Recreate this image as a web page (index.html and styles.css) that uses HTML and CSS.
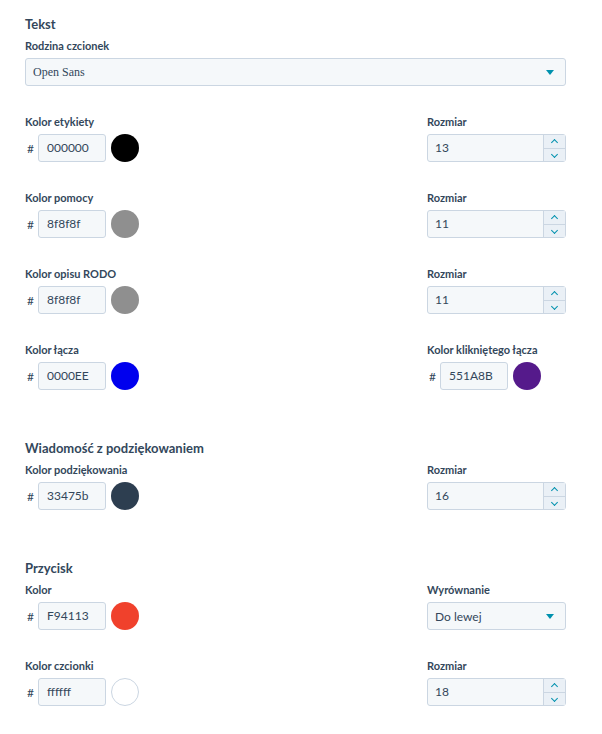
FILE: index.html
```html
<!DOCTYPE html>
<html>

<head>
    <title>Ustawienia formularza</title>
    <link rel="stylesheet" href="styles.css">
</head>

<body>
    <div class="panel">

        <!-- Tekst -->
        <div class="section">
            <h2 class="section-title">Tekst</h2>
            <div class="row">
                <div class="field full">
                    <label>Rodzina czcionek</label>
                    <div class="select serif">
                        <span>Open Sans</span>
                        <span class="caret"></span>
                    </div>
                </div>
            </div>
            <div class="row">
                <div class="field">
                    <label>Kolor etykiety</label>
                    <div class="color-input">
                        <span class="hash">#</span>
                        <div class="text-box">000000</div>
                        <span class="swatch" style="background:#000000"></span>
                    </div>
                </div>
                <div class="field right">
                    <label>Rozmiar</label>
                    <div class="number-box">
                        <span class="value">13</span>
                        <span class="spinner"><span class="up"></span><span class="down"></span></span>
                    </div>
                </div>
            </div>
            <div class="row">
                <div class="field">
                    <label>Kolor pomocy</label>
                    <div class="color-input">
                        <span class="hash">#</span>
                        <div class="text-box">8f8f8f</div>
                        <span class="swatch" style="background:#8f8f8f"></span>
                    </div>
                </div>
                <div class="field right">
                    <label>Rozmiar</label>
                    <div class="number-box">
                        <span class="value">11</span>
                        <span class="spinner"><span class="up"></span><span class="down"></span></span>
                    </div>
                </div>
            </div>
            <div class="row">
                <div class="field">
                    <label>Kolor opisu RODO</label>
                    <div class="color-input">
                        <span class="hash">#</span>
                        <div class="text-box">8f8f8f</div>
                        <span class="swatch" style="background:#8f8f8f"></span>
                    </div>
                </div>
                <div class="field right">
                    <label>Rozmiar</label>
                    <div class="number-box">
                        <span class="value">11</span>
                        <span class="spinner"><span class="up"></span><span class="down"></span></span>
                    </div>
                </div>
            </div>
            <div class="row">
                <div class="field">
                    <label>Kolor łącza</label>
                    <div class="color-input">
                        <span class="hash">#</span>
                        <div class="text-box">0000EE</div>
                        <span class="swatch" style="background:#0000ee"></span>
                    </div>
                </div>
                <div class="field right">
                    <label>Kolor klikniętego łącza</label>
                    <div class="color-input">
                        <span class="hash">#</span>
                        <div class="text-box">551A8B</div>
                        <span class="swatch" style="background:#551a8b"></span>
                    </div>
                </div>
            </div>
        </div>

        <!-- Wiadomość z podziękowaniem -->
        <div class="section">
            <h2 class="section-title">Wiadomość z podziękowaniem</h2>
            <div class="row">
                <div class="field">
                    <label>Kolor podziękowania</label>
                    <div class="color-input">
                        <span class="hash">#</span>
                        <div class="text-box">33475b</div>
                        <span class="swatch" style="background:#2d3e50"></span>
                    </div>
                </div>
                <div class="field right">
                    <label>Rozmiar</label>
                    <div class="number-box">
                        <span class="value">16</span>
                        <span class="spinner"><span class="up"></span><span class="down"></span></span>
                    </div>
                </div>
            </div>
        </div>

        <!-- Przycisk -->
        <div class="section">
            <h2 class="section-title">Przycisk</h2>
            <div class="row">
                <div class="field">
                    <label>Kolor</label>
                    <div class="color-input">
                        <span class="hash">#</span>
                        <div class="text-box">F94113</div>
                        <span class="swatch" style="background:#f0412c"></span>
                    </div>
                </div>
                <div class="field right">
                    <label>Wyrównanie</label>
                    <div class="select">
                        <span>Do lewej</span>
                        <span class="caret"></span>
                    </div>
                </div>
            </div>
            <div class="row">
                <div class="field">
                    <label>Kolor czcionki</label>
                    <div class="color-input">
                        <span class="hash">#</span>
                        <div class="text-box">ffffff</div>
                        <span class="swatch white" style="background:#ffffff"></span>
                    </div>
                </div>
                <div class="field right">
                    <label>Rozmiar</label>
                    <div class="number-box">
                        <span class="value">18</span>
                        <span class="spinner"><span class="up"></span><span class="down"></span></span>
                    </div>
                </div>
            </div>
        </div>

    </div>
</body>

</html>
```

FILE: styles.css
```css
body {
    margin: 0;
    padding: 0;
    background: #ffffff;
    font-family: "Lato", "Noto Sans", sans-serif;
    color: #33475b;
}

.panel {
    width: 541px;
    padding: 16px 0 0 25px;
}

/* rows end with 29px, the section margin collapses with it */
.section {
    margin-bottom: 50px;
}

.section-title {
    font-size: 13px;
    line-height: 16px;
    font-weight: 700;
    margin: 0 0 7px 0;
}

.row {
    display: flex;
    justify-content: space-between;
    margin-bottom: 29px;
}

.field label {
    display: block;
    font-size: 11px;
    line-height: 14px;
    font-weight: 700;
    margin-bottom: 5px;
}

.field.full {
    width: 100%;
}

.field.right {
    width: 139px;
}

/* colour input: # box swatch */
.color-input {
    display: flex;
    align-items: center;
}

.hash {
    width: 13px;
    padding-left: 2px;
    box-sizing: border-box;
    font-size: 12px;
}

.text-box {
    width: 68px;
    height: 28px;
    box-sizing: border-box;
    padding: 0 8px;
    background: #f5f8fa;
    border: 1px solid #cbd6e2;
    border-radius: 3px;
    font-size: 12px;
    line-height: 26px;
}

.swatch {
    width: 28px;
    height: 28px;
    border-radius: 50%;
    margin-left: 5px;
    box-sizing: border-box;
}

.swatch.white {
    border: 1px solid #cbd6e2;
}

/* select */
.select {
    display: flex;
    justify-content: space-between;
    align-items: center;
    height: 28px;
    box-sizing: border-box;
    padding: 0 11px 0 7px;
    background: #f5f8fa;
    border: 1px solid #cbd6e2;
    border-radius: 3px;
    font-size: 12px;
}

.select.serif {
    font-family: "Liberation Serif", serif;
}

.caret {
    width: 0;
    height: 0;
    border-left: 4px solid transparent;
    border-right: 4px solid transparent;
    border-top: 5px solid #0091ae;
}

/* number input with spinner */
.number-box {
    display: flex;
    height: 28px;
    box-sizing: border-box;
    background: #f5f8fa;
    border: 1px solid #cbd6e2;
    border-radius: 3px;
    font-size: 12px;
}

.number-box .value {
    flex: 1;
    padding-left: 7px;
    line-height: 26px;
}

.spinner {
    width: 21px;
    display: flex;
    flex-direction: column;
    border-left: 1px solid #cbd6e2;
    background: #eaf0f6;
}

.spinner span {
    flex: 1;
    position: relative;
}

.spinner .up {
    border-bottom: 1px solid #cbd6e2;
}

.spinner span::after {
    content: "";
    position: absolute;
    left: 8px;
    width: 4px;
    height: 4px;
    border-left: 1px solid #0091ae;
    border-top: 1px solid #0091ae;
}

.spinner .up::after {
    top: 5px;
    transform: rotate(45deg);
}

.spinner .down::after {
    top: 3px;
    transform: rotate(225deg);
}
```
